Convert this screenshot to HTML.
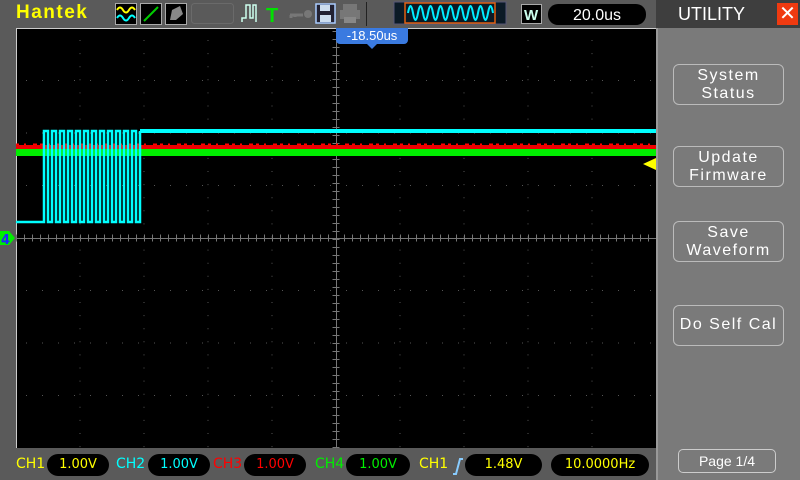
<!DOCTYPE html>
<html><head><meta charset="utf-8"><style>
*{margin:0;padding:0;box-sizing:border-box}
body{width:800px;height:480px;background:#5a5a5a;position:relative;overflow:hidden;font-family:"DejaVu Sans","Liberation Sans",sans-serif}
.abs{position:absolute}
.btn{position:absolute;left:673px;width:111px;height:41px;border:1px solid #bbb;border-radius:6px;color:#fff;font-size:16px;text-align:center;line-height:18px;padding-top:2px;letter-spacing:1.5px;font-family:"Liberation Sans",sans-serif}
.pill{position:absolute;top:454px;height:22px;background:#000;border-radius:11px;font-size:13px;text-align:center;line-height:22px}
.lab{position:absolute;top:456px;font-size:14px}
</style></head><body>
<div class="abs" style="left:16px;top:2px;color:#ffff00;font-weight:bold;font-size:19px;letter-spacing:1.5px;font-family:'Liberation Sans',sans-serif">Hantek</div>
<svg class="abs" style="left:0;top:0" width="656" height="28">
<rect x="115.5" y="3.5" width="21" height="21" fill="#000" stroke="#aaa"/>
<path d="M117 10 q3 -5 6 0 t6 0 t6 0" stroke="#ff0" fill="none" stroke-width="2"/>
<path d="M117 18 q3 -5 6 0 t6 0 t6 0" stroke="#0ff" fill="none" stroke-width="2"/>
<rect x="140.5" y="3.5" width="21" height="21" fill="#000" stroke="#aaa"/>
<path d="M144 21 L158 7" stroke="#0c0" stroke-width="2"/>
<rect x="165.5" y="3.5" width="21" height="21" fill="#000" stroke="#aaa"/>
<path d="M170 20 L172 10 L180 6 L183 14 L176 20Z" fill="#888"/>
<rect x="191.5" y="3.5" width="42" height="20" rx="3" fill="none" stroke="#6a6a6a"/>
<path d="M242 22 V18 H246 V5 H250 V18 H253 V5 H256 V22" stroke="#cfe" fill="none" stroke-width="1.5"/>
<text x="266" y="22" fill="#00e000" font-size="20" font-weight="bold" font-family="Liberation Sans">T</text>
<path d="M290 15 H303 M291 15 V18 M295 15 V17" stroke="#777" stroke-width="3"/><circle cx="308" cy="14" r="4" fill="#777"/>
<rect x="316" y="4" width="19" height="19" fill="#223" stroke="#acf" stroke-width="1.5"/><rect x="320" y="5" width="10" height="6" fill="#cde"/><rect x="320" y="15" width="11" height="7" fill="#cde"/>
<rect x="343" y="4" width="14" height="6" fill="#777"/><rect x="340" y="10" width="20" height="9" fill="#777"/><rect x="344" y="17" width="12" height="6" fill="#888"/>
<line x1="366.5" y1="2" x2="366.5" y2="26" stroke="#222"/>
<rect x="394" y="2" width="112" height="22" fill="#0b1a26" stroke="#557"/>
<rect x="405" y="3" width="90" height="20" fill="#0b1a26" stroke="#e06010" stroke-width="1.5"/>
<path d="M408 13 q2.5 -14 5 0 t5 0 t5 0 t5 0 t5 0 t5 0 t5 0 t5 0 t5 0 t5 0 t5 0 t5 0 t5 0 t5 0 t5 0 t5 0 t5 0" stroke="#0ef" fill="none" stroke-width="2"/>
<rect x="521.5" y="4.5" width="20" height="19" fill="#000" stroke="#aaa"/>
<text x="524" y="20" fill="#cfe" font-size="15" font-weight="bold" font-family="Liberation Sans">W</text>
<rect x="548" y="4" width="98" height="21" rx="10" fill="#000"/>
<text x="597" y="20" fill="#fff" font-size="16" text-anchor="middle" font-family="Liberation Sans">20.0us</text>
</svg>
<div class="abs" style="left:656px;top:0;width:144px;height:28px;background:#3e3e3e"></div>
<div class="abs" style="left:656px;top:28px;width:144px;height:452px;background:#7a7a7a;border-left:2px solid #999"></div>
<div class="abs" style="left:678px;top:4px;color:#fff;font-size:18px;font-family:'Liberation Sans',sans-serif">UTILITY</div>
<div class="abs" style="left:777px;top:3px;width:21px;height:22px;background:#f03a10;color:#fff;font-size:20px;text-align:center;line-height:22px;font-family:'Liberation Sans',sans-serif">✕</div>
<div class="btn" style="top:64px">System<br>Status</div>
<div class="btn" style="top:146px">Update<br>Firmware</div>
<div class="btn" style="top:221px">Save<br>Waveform</div>
<div class="btn" style="top:305px;line-height:34px;padding-top:2px">Do Self Cal</div>
<div class="abs" style="left:678px;top:449px;width:98px;height:24px;border:1px solid #ccc;border-radius:5px;color:#fff;font-size:14px;text-align:center;line-height:22px;font-family:'Liberation Sans',sans-serif">Page 1/4</div>
<svg class="abs" style="left:0;top:28px" width="656" height="422">
<rect x="16" y="0" width="640" height="420" fill="#000"/>
<line x1="16" y1="0.5" x2="656" y2="0.5" stroke="#ccc"/>
<line x1="16.5" y1="0" x2="16.5" y2="420" stroke="#ccc"/>
<path d="M16 52.5H656M16 105H656M16 157.5H656M16 262.5H656M16 315H656M16 367.5H656" stroke="#555" stroke-dasharray="1 15" stroke-dashoffset="-10"/>
<path d="M80 0V420M144 0V420M208 0V420M272 0V420M400 0V420M464 0V420M528 0V420M592 0V420" stroke="#555" stroke-dasharray="1 12.1" stroke-dashoffset="-12"/>
<line x1="16" y1="210.5" x2="656" y2="210.5" stroke="#777"/>
<line x1="336.5" y1="0" x2="336.5" y2="420" stroke="#777"/>
<path d="M16 210H656" stroke="#777" stroke-dasharray="1 7" stroke-width="7"/>
<path d="M336 0V420" stroke="#777" stroke-dasharray="1 7" stroke-dashoffset="-3" stroke-width="7"/>
<rect x="16" y="121" width="640" height="7" fill="#0e0"/>
<path d="M16 118H656" stroke="#f00" stroke-width="5" stroke-dasharray="3 5 2 7 4 3"/>
<rect x="16" y="117" width="640" height="4" fill="#e00"/>
<path d="M140 103H656" stroke="#0ff" stroke-width="4"/>
<path d="M16 194H44 V103 H48 V194 H52 V103 H56 V194 H60 V103 H64 V194 H68 V103 H72 V194 H76 V103 H80 V194 H84 V103 H88 V194 H92 V103 H96 V194 H100 V103 H104 V194 H108 V103 H112 V194 H116 V103 H120 V194 H124 V103 H128 V194 H132 V103 H136 V194 H140 V103" stroke="#0ff" stroke-width="2.5" fill="none"/>
<path d="M643 136 L656 130 V142Z" fill="#ff0"/>
<path d="M0 203 H9 L15 210 L9 217 H0Z" fill="#0e0"/>
<text x="1" y="216" fill="#22f" font-size="13" font-weight="bold">4</text>
</svg>
<div class="abs" style="left:336px;top:28px;width:72px;height:16px;background:#3a7ae0;color:#fff;font-size:13px;line-height:16px;text-align:center;border-radius:0 0 4px 4px;font-family:'Liberation Sans',sans-serif">-18.50us</div>
<div class="abs" style="left:367px;top:44px;width:0;height:0;border-left:5px solid transparent;border-right:5px solid transparent;border-top:5px solid #3a7ae0"></div>
<div class="lab" style="left:16px;color:#ff0">CH1</div>
<div class="pill" style="left:47px;width:62px;color:#ff0">1.00V</div>
<div class="lab" style="left:116px;color:#0ff">CH2</div>
<div class="pill" style="left:148px;width:62px;color:#0ff">1.00V</div>
<div class="lab" style="left:213px;color:#f00">CH3</div>
<div class="pill" style="left:244px;width:62px;color:#f00">1.00V</div>
<div class="lab" style="left:315px;color:#0e0">CH4</div>
<div class="pill" style="left:346px;width:64px;color:#0e0">1.00V</div>
<div class="lab" style="left:419px;color:#ff0">CH1</div>
<svg class="abs" style="left:452px;top:457px" width="12" height="18"><path d="M1 17 H4 L8 2 H11" stroke="#8cf" stroke-width="2" fill="none"/></svg>
<div class="pill" style="left:465px;width:77px;color:#ff0">1.48V</div>
<div class="pill" style="left:551px;width:98px;color:#ff0">10.0000Hz</div>
</body></html>
